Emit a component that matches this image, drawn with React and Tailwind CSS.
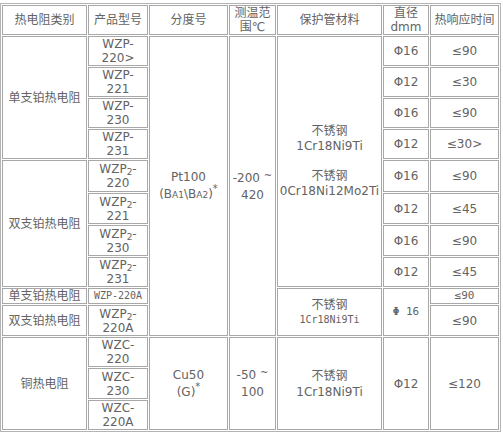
import React from 'react';

const cell = "border border-[#a8a8a8] p-0 text-center align-middle";
const mono = "font-['DejaVu_Sans_Mono','Liberation_Mono',monospace] text-[10px]";

const Sub = ({ children }) => <sub className="text-[9px]">{children}</sub>;

// small "A1"/"A2" part of the BA grade marks
const Sm = ({ children }) => <span className="text-[9px]">{children}</span>;

const Star = () => <sup className="text-[10px] -top-[0.6em]">*</sup>;

const Model = ({ a, b, sub }) => (
  <td className={cell}>
    {a}{sub && <Sub>2</Sub>}-<br />{b}
  </td>
);

const Dia = ({ v }) => <td className={cell}>Φ{v}</td>;
const Resp = ({ v }) => <td className={cell}>≤{v}</td>;

export default function App() {
  return (
    <div className="bg-white pt-[3px] w-[503px] h-[433px] text-[#636363] text-[12px] leading-[14px] font-['DejaVu_Sans','Noto_Sans_CJK_SC',sans-serif]">
      <table className="table-fixed w-[501px] border-separate border-spacing-[1px] border border-[#b4b4b4]">
        <thead>
          <tr className="h-[30px]">
            <th className={`${cell} font-normal w-[85px]`}>热电阻类别</th>
            <th className={`${cell} font-normal w-[60px]`}>产品型号</th>
            <th className={`${cell} font-normal w-[79px]`}>分度号</th>
            <th className={`${cell} font-normal w-[47px]`}>测温范<br />围℃</th>
            <th className={`${cell} font-normal w-[105px]`}>保护管材料</th>
            <th className={`${cell} font-normal w-[46px]`}>直径<br />dmm</th>
            <th className={`${cell} font-normal w-[69px]`}>热响应时间</th>
          </tr>
        </thead>
        <tbody>
          <tr className="h-[30px]">
            <td className={cell} rowSpan={4}>单支铂热电阻</td>
            <Model a="WZP" b="220>" />
            <td className={`${cell} leading-[17px]`} rowSpan={10}>
              Pt100<br />(B<Sm>A1</Sm>\B<Sm>A2</Sm>)<Star />
            </td>
            <td className={`${cell} leading-[16px]`} rowSpan={10}>
              -200 <span className="relative -top-[3px] text-[10px]">~</span><br />420
            </td>
            <td className={`${cell} leading-[15px]`} rowSpan={8}>
              不锈钢<br />1Cr18Ni9Ti<br /><br />不锈钢<br />0Cr18Ni12Mo2Ti
            </td>
            <Dia v="16" />
            <Resp v="90" />
          </tr>
          <tr className="h-[30px]">
            <Model a="WZP" b="221" />
            <Dia v="12" />
            <Resp v="30" />
          </tr>
          <tr className="h-[30px]">
            <Model a="WZP" b="230" />
            <Dia v="16" />
            <Resp v="90" />
          </tr>
          <tr className="h-[30px]">
            <Model a="WZP" b="231" />
            <Dia v="12" />
            <Resp v="30>" />
          </tr>
          <tr className="h-[32px]">
            <td className={cell} rowSpan={4}>双支铂热电阻</td>
            <Model a="WZP" b="220" sub />
            <Dia v="16" />
            <Resp v="90" />
          </tr>
          <tr className="h-[31px]">
            <Model a="WZP" b="221" sub />
            <Dia v="12" />
            <Resp v="45" />
          </tr>
          <tr className="h-[31px]">
            <Model a="WZP" b="230" sub />
            <Dia v="16" />
            <Resp v="90" />
          </tr>
          <tr className="h-[30px]">
            <Model a="WZP" b="231" sub />
            <Dia v="12" />
            <Resp v="45" />
          </tr>
          <tr className="h-[16px]">
            <td className={cell}>单支铂热电阻</td>
            <td className={`${cell} ${mono} text-[10.5px]`}>WZP-220A</td>
            <td className={cell} rowSpan={2}>
              不锈钢<br /><span className={`${mono} text-[10.5px]`}>1Cr18Ni9Ti</span>
            </td>
            <td className={`${cell} ${mono} text-[11px]`} rowSpan={2}>
              <span className="font-bold">Φ</span> 16
            </td>
            <td className={`${cell} ${mono} text-[11px] leading-[12px]`}>≤90</td>
          </tr>
          <tr className="h-[31px]">
            <td className={cell}>双支铂热电阻</td>
            <Model a="WZP" b="220A" sub />
            <Resp v="90" />
          </tr>
          <tr className="h-[30px]">
            <td className={cell} rowSpan={3}>铜热电阻</td>
            <Model a="WZC" b="220" />
            <td className={`${cell} leading-[17px]`} rowSpan={3}>
              Cu50<br />(G)<Star />
            </td>
            <td className={`${cell} leading-[16px]`} rowSpan={3}>
              -50 <span className="relative -top-[3px] text-[10px]">~</span><br />100
            </td>
            <td className={`${cell} leading-[16px]`} rowSpan={3}>
              不锈钢<br />1Cr18Ni9Ti
            </td>
            <td className={cell} rowSpan={3}>Φ12</td>
            <td className={cell} rowSpan={3}>≤120</td>
          </tr>
          <tr className="h-[31px]">
            <Model a="WZC" b="230" />
          </tr>
          <tr className="h-[29px]">
            <Model a="WZC" b="220A" />
          </tr>
        </tbody>
      </table>
    </div>
  );
}
